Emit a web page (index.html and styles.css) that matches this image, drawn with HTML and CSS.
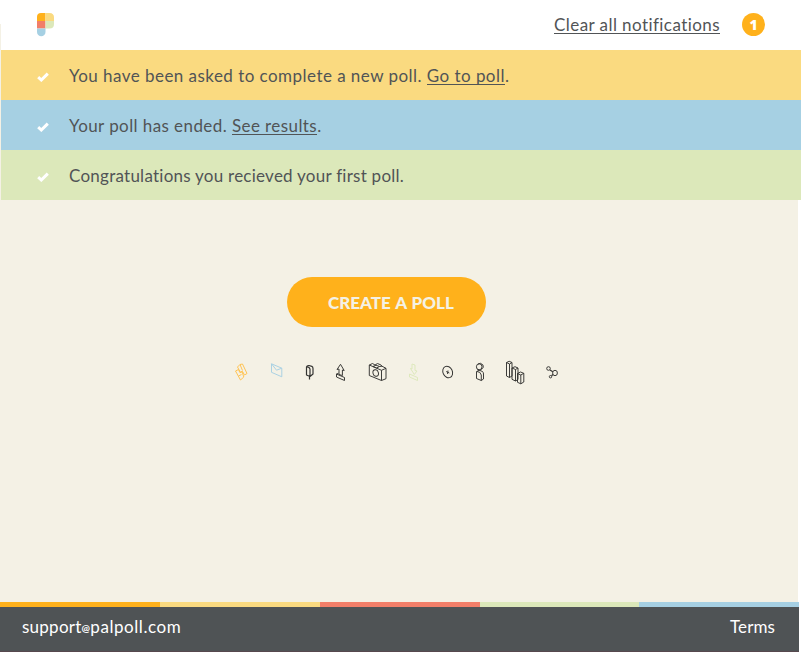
FILE: index.html
```html
<!DOCTYPE html>
<html lang="en">
<head>
<meta charset="utf-8">
<title>PalPoll</title>
<link rel="stylesheet" href="styles.css">
</head>
<body>
<header class="topbar">
  <svg class="logo" width="17" height="24" viewBox="0 0 17 24">
    <path fill="#ffb11b" d="M0 8V4Q0 0 4 0H8.5V8Z"/>
    <path fill="#fada80" d="M8.5 8V0H12.500Q17 0 17 4.500V8Z"/>
    <path fill="#f27e68" d="M0 8H8.500V15.500H0Z"/>
    <path fill="#dce8ba" d="M8.500 8H17V11Q17 15.500 12.500 15.500H8.500Z"/>
    <path fill="#a6d0e3" d="M0 15.500H8.500V19A4.250 4.250 0 0 1 0 19Z"/>
  </svg>
  <a class="clear">Clear all notifications</a>
  <span class="badge">1</span>
</header>
<section class="notices">
  <div class="notice yellow">
    <svg class="check" width="12" height="10" viewBox="0 0 12 10"><path d="M1.200 5.200L4.300 8L10.800 1.600"/></svg>
    <p class="n1">You have been asked to complete a new poll. <a>Go to poll</a>.</p>
  </div>
  <div class="notice blue">
    <svg class="check" width="12" height="10" viewBox="0 0 12 10"><path d="M1.200 5.200L4.300 8L10.800 1.600"/></svg>
    <p class="n2">Your poll has ended. <a>See results</a>.</p>
  </div>
  <div class="notice green">
    <svg class="check" width="12" height="10" viewBox="0 0 12 10"><path d="M1.200 5.200L4.300 8L10.800 1.600"/></svg>
    <p class="n3">Congratulations you recieved your first poll.</p>
  </div>
</section>
<main class="stage">
  <button class="create"><span>CREATE A POLL</span></button>
  <div class="icons">
    <svg class="orange" width="30" height="26" viewBox="230 360 30 26"><path d="M240 364.500L242.500 364L247 373.500L244.500 375L242.500 371.500L240.500 372.500L237.500 367ZM235.500 371L238.500 369.500L239.800 372.500L242 371.500L243.800 377L240.500 380ZM238.500 376L241.500 374.500M240 364.500L242.500 370.500"/></svg>
    <svg class="sky" width="35" height="26" viewBox="260 360 35 26"><path d="M271.500 363.800L281.800 368.200V376.800L271.500 372.300ZM271.500 363.800L276.500 370.200L281.800 368.200"/></svg>
    <svg width="30" height="26" viewBox="295 360 30 26"><path stroke-width="1.200" d="M306.500 375V367Q307 365.300 309 365.500L311.800 366.300Q313 367 313 368.500V374L310 376.500ZM306.500 367.500Q308.500 366 310 369V376.500M309.500 376.500V379.500"/></svg>
    <svg width="35" height="26" viewBox="325 360 35 26"><path d="M340.500 364.300L344.200 370.500L342.400 370V375.500L339 374.500V369L337 369.500ZM336.500 374V377L344.500 380.500V377.500L336.500 374M336.500 374L338.500 373.300"/></svg>
    <svg width="38" height="26" viewBox="360 360 38 26"><path d="M369.300 365L381.500 370.300V380.500L369.300 375.500ZM369.300 365L372.500 363.500L375 365L377.500 363.500L381 365L382 366.200L386 368.300V378.700L381.500 380.500M381.500 370.300L386 368.300M373 366.500L376 365.200L379.500 366.500L376.500 368L373 366.500M379.500 366.500L382 366.200"/><ellipse cx="375.700" cy="373" rx="2.700" ry="3.300" transform="rotate(-15 375.700 373)"/></svg>
    <svg class="lime" width="32" height="26" viewBox="398 360 32 26"><path d="M412 364L415 365V370.500L417 371L414.300 374.500L410.500 368.500L412 369ZM409.500 374V377L417.500 380.500V377.500Z"/></svg>
    <svg width="32" height="26" viewBox="430 360 32 26"><ellipse cx="447.700" cy="372" rx="4.700" ry="6" transform="rotate(-25 447.700 372)"/><path d="M446.200 371.500L449.300 373M448 370.500L447.500 374"/></svg>
    <svg width="33" height="26" viewBox="462 360 33 26"><ellipse cx="479.200" cy="366.800" rx="2.800" ry="3"/><path d="M478 364L480.500 363.300Q484 364.500 483.300 367.500L480.500 370M477.500 369.500L482.500 371.500Q483.500 372.500 483.500 374V379L481.300 380.500L476.500 378.500V371.500L479.500 370.200M477 371.500Q480.500 371.500 481.300 375V380.500"/></svg>
    <svg width="40" height="26" viewBox="495 360 40 26"><path d="M506.500 362.500L509.200 361.300L512 362.500V376L509.500 377.500L506.500 376ZM506.500 362.500L509.500 364L512 362.500M509.500 364V377.500M512 368L515 366.700L518 368V379.500L515.500 381L512 379.300ZM512 368L515.500 369.500L518 368M515.500 369.500V381M517.500 373.500L520.500 372L523.800 373.300V382L520.800 383.800L517.500 382.300ZM517.500 373.500L520.800 375L523.800 373.300M520.800 375V383.800"/></svg>
    <svg width="35" height="26" viewBox="535 360 35 26"><ellipse cx="548.500" cy="368.500" rx="1.800" ry="1.800"/><ellipse cx="555" cy="373" rx="2.400" ry="2.700"/><circle cx="550.500" cy="376.700" r="1.200"/><path stroke-width="1.300" d="M550 370L552.800 371.700M551.500 375.700L553 374.500"/></svg>
  </div>
</main>
<div class="stripe"><i></i><i></i><i></i><i></i><i></i></div>
<footer class="footer"><span class="mail"><span class="user">support</span><small>@</small>palpoll.com</span><span class="terms">Terms</span></footer>
</body>
</html>
```
FILE: styles.css
```css
* { box-sizing: border-box; }
body { margin: 0; background: #fff; color: #515456; font: 17px/24px Lato, sans-serif; height: 652px; overflow: hidden; }
p { margin: 0; white-space: nowrap; }
a { text-decoration: none; border-bottom: 1px solid #515456; display: inline-block; line-height: 17px; white-space: nowrap; }
.topbar { height: 50px; display: flex; align-items: center; padding: 0 36px 0 37px; position: relative; }
.topbar::before { content: ""; position: absolute; left: 0; top: 24px; width: 1px; height: 176px; background: #f4f1e5; }
.logo { display: block; }
.clear { margin-left: auto; margin-right: 22px; letter-spacing: .43px; }
.badge { width: 23px; height: 23px; border-radius: 50%; background: #ffb11b; color: #fff; font: 800 14px/23px "Open Sans", sans-serif; text-align: center; margin-top: -1px; }
.notices { margin-left: 1px; }
.notice { height: 50px; display: flex; align-items: center; padding: 2px 0 0 36px; }
.yellow { background: #fada80; }
.blue { background: #a6d0e3; }
.green { background: #dce8ba; }
.check { margin: 2px 20px 0 0; fill: none; stroke: #fff; stroke-width: 3; }
.n1 { letter-spacing: .46px; }
.n2 { letter-spacing: .42px; }
.n3 { letter-spacing: .25px; }
.stage { width: 798px; height: 402px; background: #f4f1e5; padding-top: 77px; }
.create { display: block; width: 199px; height: 50px; margin: 0 0 0 287px; padding: 2px 0 0 41px; border: 0; border-radius: 25px; background: #ffb11b; color: #f4f1e5; text-align: left; font: 900 17px/24px Lato, sans-serif; word-spacing: 1px; white-space: nowrap; }
.icons { display: flex; margin: 33px 0 0 230px; }
.icons svg { display: block; flex: none; fill: none; stroke: #343432; stroke-width: .95; stroke-linejoin: round; }
.icons .orange { stroke: #ffc14d; }
.icons .sky { stroke: #a6d0e3; }
.icons .lime { stroke: #dce8ba; }
.stripe { display: grid; grid-template-columns: 160px 160px 160px 159px 160px; width: 799px; height: 5px; }
.stripe i:nth-child(1) { background: #ffb11b; }
.stripe i:nth-child(2) { background: #fada80; }
.stripe i:nth-child(3) { background: #f27e68; }
.stripe i:nth-child(4) { background: #dce8ba; }
.stripe i:nth-child(5) { background: #a6d0e3; }
.footer { width: 799px; height: 45px; background: #4f5355; border-bottom: 1px solid #57494e; color: #fff; display: flex; justify-content: space-between; align-items: center; padding: 0 24px 5px 22px; }
.mail { letter-spacing: .56px; }
.user { letter-spacing: .25px; }
.terms { letter-spacing: .1px; }
.footer small { font-size: 10px; font-weight: 700; line-height: 1; vertical-align: 1px; letter-spacing: .3px; }
```
